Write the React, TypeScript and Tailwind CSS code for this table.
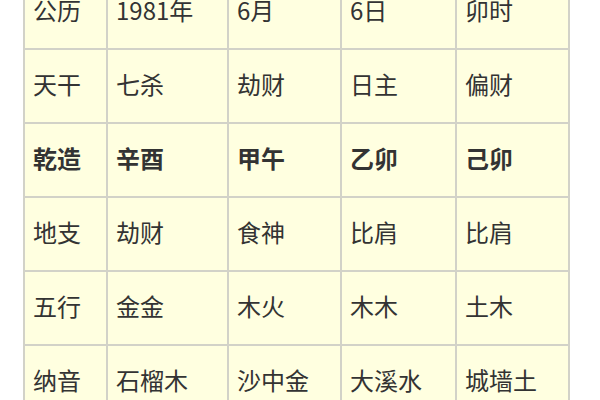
import React from "react";

const rows: string[][] = [
  ["公历", "1981年", "6月", "6日", "卯时"],
  ["天干", "七杀", "劫财", "日主", "偏财"],
  ["乾造", "辛酉", "甲午", "乙卯", "己卯"],
  ["地支", "劫财", "食神", "比肩", "比肩"],
  ["五行", "金金", "木火", "木木", "土木"],
  ["纳音", "石榴木", "沙中金", "大溪水", "城墙土"],
];

export default function App() {
  return (
    <div
      className="w-[600px] h-[400px] overflow-hidden bg-white"
      style={{ fontFamily: '"Noto Sans CJK SC", "Noto Sans", sans-serif' }}
    >
      <div className="pl-[23px] mt-[-26px]">
        <div className="inline-grid grid-cols-[81px_119px_111px_113px_111px] auto-rows-[72px] gap-[2px] p-[2px] bg-[#d2d2c8]">
          {rows.map((r, i) =>
            r.map((c, j) => (
              <div
                key={`${i}-${j}`}
                className={`bg-[#ffffe0] flex items-center pl-[8px] pb-[4px] text-[24px] leading-none text-[#333333] ${
                  i === 2 ? "font-bold" : "font-normal"
                }`}
              >
                {c}
              </div>
            ))
          )}
        </div>
      </div>
    </div>
  );
}
